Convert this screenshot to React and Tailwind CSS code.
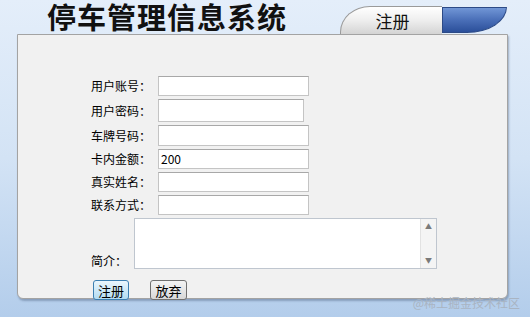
import React from 'react';

const font = { fontFamily: '"Noto Sans CJK SC", "Liberation Sans", sans-serif' };

// 一行表单：标签 + 输入框
const Row = ({ label, value = '', width = 'w-[151px]', height = 'h-[20px]' }) => (
  <div className="flex items-center">
    <span className="w-[67px] text-[12px] leading-none text-black">{label}</span>
    <div
      className={`${width} ${height} border border-[#c4c4c4] border-t-[#a8a8a8] bg-white px-[2px] text-[12px] leading-[18px] text-black`}
    >
      {value}
    </div>
  </div>
);

export default function App() {
  return (
    <div
      className="relative w-[530px] h-[317px] overflow-hidden bg-gradient-to-b from-[#e4eefa] via-[#d3e3f5] to-[#b3cdeb]"
      style={font}
    >
      {/* 标题与标签页 */}
      <div className="flex h-[34px] items-end">
        <h1 className="ml-[47px] w-[293px] self-start pt-[1px] text-[29px] font-bold leading-[31px] tracking-[1px] text-[#111]">
          停车管理信息系统
        </h1>
        <div className="flex h-[28px] w-[102px] items-center justify-center rounded-tl-[30px_26px] border-l border-t border-[#9a9a9a] bg-gradient-to-b from-[#ffffff] via-[#eeeeee] to-[#d4d4d4] pl-[2px] text-[17px] text-[#111]">
          注册
        </div>
        <div className="mb-[1px] h-[26px] w-[65px] rounded-br-[40px_26px] border border-[#2c4a86] bg-gradient-to-b from-[#7196d6] via-[#4a6fb8] to-[#2b4f9a]" />
      </div>

      {/* 主面板 */}
      <div className="ml-[17px] h-[265px] w-[491px] rounded-b-[6px] border border-[#a3a3a3] bg-[#f1f1f1] pl-[73px] pt-[41px] shadow-[1px_2px_2px_rgba(80,100,130,0.45)]">
        <div className="flex flex-col gap-[3px]">
          <Row label="用户账号：" />
          <Row label="用户密码：" width="w-[146px]" height="h-[23px]" />
          <Row label="车牌号码：" height="h-[21px]" />
          <Row label="卡内金额：" value="200" />
          <Row label="真实姓名：" />
          <Row label="联系方式：" />
          <div className="flex items-end">
            <span className="w-[43px] pb-[2px] text-[12px] leading-none text-black">简介：</span>
            <div className="flex h-[51px] w-[303px] border border-[#bfc6cf] bg-white">
              <div className="flex-1" />
              <div className="flex w-[16px] flex-col items-center justify-between border-l border-[#e2e2e2] bg-[#f4f4f4] py-[4px] text-[7px] leading-none text-[#7a7a7a]">
                <span>▲</span>
                <span>▼</span>
              </div>
            </div>
          </div>
        </div>
        <div className="mt-[11px] flex gap-[21px] pl-[2px]">
          <button className="h-[20px] w-[36px] rounded-[3px] border border-[#3c7fb1] bg-gradient-to-b from-[#eaf6fd] to-[#b3dcf1] text-[13px] leading-none text-black">
            注册
          </button>
          <button className="h-[20px] w-[37px] rounded-[3px] border border-[#707070] bg-gradient-to-b from-[#f4f4f4] to-[#d8d8d8] text-[13px] leading-none text-black">
            放弃
          </button>
        </div>
      </div>

      {/* 水印 */}
      <div className="absolute right-[10px] top-[294px] text-[12px] text-[#a9b4c2]">@稀土掘金技术社区</div>
    </div>
  );
}
